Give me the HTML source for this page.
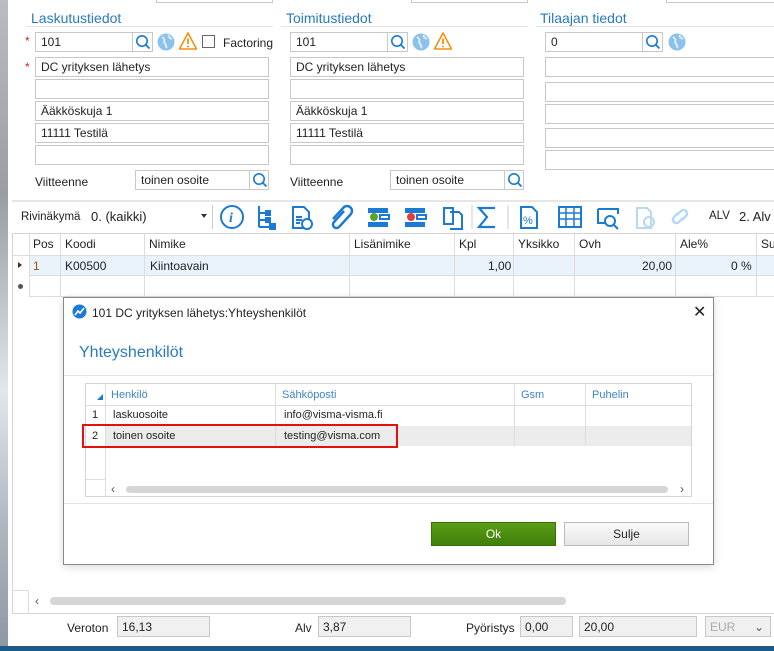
<!DOCTYPE html>
<html><head><meta charset="utf-8"><style>
*{margin:0;padding:0;box-sizing:border-box}
body{width:774px;height:651px;overflow:hidden;background:#fff;font-family:"Liberation Sans",sans-serif;font-size:12px;color:#222;position:relative}
.a{position:absolute}
.in{position:absolute;border:1px solid #c8c8c8;background:#fff;height:20px;padding:2px 5px;font-size:12px;white-space:nowrap}
.sb{position:absolute;border:1px solid #c8c8c8;background:#fff;width:21px;height:20px}
.h{position:absolute;color:#2a7ac0;font-size:14px}
.hl{position:absolute;height:1px;background:#e3e3e3}
.lbl{position:absolute;font-size:12px}
.req{position:absolute;color:#e02020;font-size:12px}
.th{position:absolute;top:234px;height:21px;border-right:1px solid #ddd;padding:3px 4px;font-size:12px}
.vl{position:absolute;width:1px;background:#ddd}
.ro{position:absolute;border:1px solid #c8c8c8;background:#f0f0f0;height:21px;padding:3px 4px;font-size:12px}
</style></head><body>
<div class="a" style="left:0;top:0;width:8px;height:651px;background:linear-gradient(#b9bcc0,#9a9ea4 30%,#c9ced4 50%,#e2e7ed 60%,#b0b8c2 80%,#8d96a2)"></div>
<div class="a" style="left:0;top:646px;width:774px;height:5px;background:#1d5a86"></div>
<div class="a" style="left:156px;top:-2px;width:117px;height:5px;border:1px solid #c8c8c8"></div>
<div class="a" style="left:411px;top:-2px;width:117px;height:5px;border:1px solid #c8c8c8"></div>
<div class="a" style="left:666px;top:-2px;width:110px;height:5px;border:1px solid #c8c8c8"></div>

<svg width="0" height="0" style="position:absolute"><defs>
<g id="mag"><circle cx="9" cy="8" r="5.2" fill="none" stroke="#1a7ad4" stroke-width="1.6"/><line x1="12.8" y1="11.8" x2="16.5" y2="15.5" stroke="#1a7ad4" stroke-width="1.8"/></g>
<g id="glb"><circle cx="9" cy="9" r="8.5" fill="#8cc2ea"/><path d="M5 4c2 1 3 3 2 5 2 1 1 4 3 6M12 2c-1 2 1 3 3 4" stroke="#d8ecfa" stroke-width="2" fill="none"/></g>
<g id="warn"><path d="M9 1L17.5 17H0.5Z" fill="none" stroke="#f29111" stroke-width="1.6" stroke-linejoin="round"/><line x1="9" y1="6.5" x2="9" y2="12" stroke="#f29111" stroke-width="1.8"/><circle cx="9" cy="14.5" r="1" fill="#f29111"/></g>
</defs></svg>

<!-- Laskutustiedot -->
<div class="h" style="left:31px;top:10px">Laskutustiedot</div>
<div class="hl" style="left:26px;top:26px;width:247px"></div>
<div class="req" style="left:25px;top:34px">*</div>
<div class="in" style="left:35px;top:32px;width:98px">101</div>
<div class="sb" style="left:132px;top:32px"><svg width="20" height="19"><use href="#mag"/></svg></div>
<svg class="a" style="left:157px;top:33px" width="18" height="18"><use href="#glb"/></svg>
<svg class="a" style="left:179px;top:32px" width="18" height="18"><use href="#warn"/></svg>
<div class="a" style="left:202px;top:35px;width:13px;height:13px;border:1px solid #666"></div>
<div class="lbl" style="left:223px;top:36px">Factoring</div>
<div class="req" style="left:25px;top:60px">*</div>
<div class="in" style="left:35px;top:57px;width:234px">DC yrityksen lähetys</div>
<div class="in" style="left:35px;top:79px;width:234px"></div>
<div class="in" style="left:35px;top:101px;width:234px">Ääkköskuja 1</div>
<div class="in" style="left:35px;top:123px;width:234px">11111 Testilä</div>
<div class="in" style="left:35px;top:145px;width:234px"></div>
<div class="lbl" style="left:35px;top:175px">Viitteenne</div>
<div class="in" style="left:135px;top:170px;width:115px">toinen osoite</div>
<div class="sb" style="left:249px;top:170px;width:20px"><svg width="20" height="19"><use href="#mag"/></svg></div>

<!-- Toimitustiedot -->
<div class="h" style="left:286px;top:10px">Toimitustiedot</div>
<div class="hl" style="left:281px;top:26px;width:247px"></div>
<div class="in" style="left:290px;top:32px;width:98px">101</div>
<div class="sb" style="left:387px;top:32px"><svg width="20" height="19"><use href="#mag"/></svg></div>
<svg class="a" style="left:412px;top:33px" width="18" height="18"><use href="#glb"/></svg>
<svg class="a" style="left:434px;top:32px" width="18" height="18"><use href="#warn"/></svg>
<div class="in" style="left:290px;top:57px;width:234px">DC yrityksen lähetys</div>
<div class="in" style="left:290px;top:79px;width:234px"></div>
<div class="in" style="left:290px;top:101px;width:234px">Ääkköskuja 1</div>
<div class="in" style="left:290px;top:123px;width:234px">11111 Testilä</div>
<div class="in" style="left:290px;top:145px;width:234px"></div>
<div class="lbl" style="left:290px;top:175px">Viitteenne</div>
<div class="in" style="left:390px;top:170px;width:115px">toinen osoite</div>
<div class="sb" style="left:504px;top:170px;width:20px"><svg width="20" height="19"><use href="#mag"/></svg></div>

<!-- Tilaajan -->
<div class="h" style="left:540px;top:10px">Tilaajan tiedot</div>
<div class="hl" style="left:536px;top:26px;width:240px"></div>
<div class="in" style="left:545px;top:32px;width:98px">0</div>
<div class="sb" style="left:642px;top:32px"><svg width="20" height="19"><use href="#mag"/></svg></div>
<svg class="a" style="left:668px;top:33px" width="18" height="18"><use href="#glb"/></svg>
<div class="in" style="left:545px;top:57px;width:240px"></div>
<div class="in" style="left:545px;top:82px;width:240px"></div>
<div class="in" style="left:545px;top:104px;width:240px"></div>
<div class="in" style="left:545px;top:128px;width:240px"></div>
<div class="in" style="left:545px;top:150px;width:240px"></div>

<!-- toolbar -->
<div class="a" style="left:12px;top:200px;width:762px;height:2px;background:#e6e6e6"></div>
<div class="lbl" style="left:21px;top:211px;font-size:11.5px">Rivinäkymä</div>
<div class="lbl" style="left:91px;top:209px;font-size:13px">0. (kaikki)</div>
<div class="a" style="left:201px;top:214px;border:3.5px solid transparent;border-top:4px solid #333"></div>
<div class="a" style="left:212px;top:205px;width:1px;height:24px;background:#ccc"></div>
<svg class="a" style="left:218px;top:203px" width="520" height="28" fill="none" stroke="#1a7ad4" stroke-width="2">
<circle cx="14" cy="14" r="11"/><text x="11" y="19" font-family="Liberation Serif" font-style="italic" font-weight="bold" font-size="14" fill="#1a7ad4" stroke="none">i</text>
<path d="M41 3v21M41 10h8M41 17h8M41 24h10"/><rect x="48" y="8" width="4" height="4" fill="#1a7ad4"/><rect x="48" y="15" width="4" height="4" fill="#1a7ad4"/><rect x="52" y="21" width="5" height="5" fill="#1a7ad4"/>
<path d="M75 4h11l5 5v16H75z"/><circle cx="89" cy="21" r="5" fill="#fff"/><path d="M78 14h6M78 17h6M78 20h4"/>
<path d="M126 8l-10 11a3.5 3.5 0 0 0 5 5l12-13a5 5 0 0 0-7-7l-11 12" stroke-width="2.5"/>
<rect x="150" y="5" width="20" height="5" fill="#1a7ad4" stroke="none"/><rect x="150" y="19" width="20" height="5" fill="#1a7ad4" stroke="none"/><circle cx="156" cy="14" r="4" fill="#57a82a" stroke="none"/><rect x="162" y="12" width="9" height="4" fill="none"/>
<rect x="187" y="5" width="20" height="5" fill="#1a7ad4" stroke="none"/><rect x="187" y="19" width="20" height="5" fill="#1a7ad4" stroke="none"/><circle cx="193" cy="14" r="4" fill="#e04040" stroke="none"/><rect x="199" y="12" width="9" height="4" fill="none"/>
<path d="M226 5h9v16h-9zM232 9h9l3 3v14h-12"/>
<path d="M277 5h-16l8 9-8 10h16" stroke-width="2.2"/>
<path d="M303 4h11l5 5v16h-16z"/><text x="305" y="21" font-size="11" fill="#1a7ad4" stroke="none">%</text>
<rect x="341" y="4" width="22" height="20"/><path d="M341 10h22M341 16h22M348 4v20M356 4v20" stroke-width="1.5"/>
<path d="M380 6h20v5M380 6v14h8"/><circle cx="392" cy="18" r="5"/><path d="M396 22l4 4"/>
<path d="M419 5h10l4 4v16h-14z" stroke="#b8d8f3"/><circle cx="431" cy="19" r="5" stroke="#b8d8f3"/>
<path d="M460 10l-4 4a3.5 3.5 0 0 0 5 5l4-4M464 17l4-4a3.5 3.5 0 0 0-5-5l-4 4" stroke="#b8d8f3" stroke-width="2.5"/>
<line x1="254" y1="2" x2="254" y2="26" stroke="#ccc" stroke-width="1"/><line x1="290" y1="2" x2="290" y2="26" stroke="#ccc" stroke-width="1"/>
</svg>
<div class="lbl" style="left:709px;top:210px;font-size:11.5px">ALV</div>
<div class="lbl" style="left:739px;top:209px;font-size:13px">2. Alv</div>

<!-- grid -->
<div class="a" style="left:12px;top:233px;width:764px;height:381px;border:1px solid #d4d4d4;border-right:none"></div>
<div class="a" style="left:12px;top:255px;width:762px;height:1px;background:#ddd"></div>
<div class="a" style="left:29px;top:256px;width:745px;height:19px;background:#eaf3fb"></div>
<div class="a" style="left:29px;top:275px;width:745px;height:1px;background:#ddd"></div>
<div class="a" style="left:29px;top:296px;width:745px;height:1px;background:#ddd"></div>
<div class="vl" style="left:29px;top:234px;height:62px"></div>
<div class="th" style="left:29px;width:32px">Pos</div>
<div class="th" style="left:61px;width:84px">Koodi</div>
<div class="th" style="left:145px;width:205px">Nimike</div>
<div class="th" style="left:350px;width:105px">Lisänimike</div>
<div class="th" style="left:455px;width:59px">Kpl</div>
<div class="th" style="left:514px;width:61px">Yksikko</div>
<div class="th" style="left:575px;width:101px">Ovh</div>
<div class="th" style="left:676px;width:81px">Ale%</div>
<div class="th" style="left:757px;width:30px">Su</div>
<div class="vl" style="left:60px;top:255px;height:41px"></div><div class="vl" style="left:144px;top:255px;height:41px"></div><div class="vl" style="left:349px;top:255px;height:41px"></div><div class="vl" style="left:454px;top:255px;height:41px"></div><div class="vl" style="left:513px;top:255px;height:41px"></div><div class="vl" style="left:574px;top:255px;height:41px"></div><div class="vl" style="left:675px;top:255px;height:41px"></div><div class="vl" style="left:756px;top:255px;height:41px"></div>
<div class="a" style="left:18px;top:262px;border:3px solid transparent;border-left:4px solid #333"></div>
<div class="a" style="left:18px;top:284px;width:5px;height:5px;background:#555;border-radius:50%"></div>
<div class="lbl" style="left:33px;top:259px;color:#a05000">1</div>
<div class="lbl" style="left:65px;top:259px">K00500</div>
<div class="lbl" style="left:150px;top:259px">Kiintoavain</div>
<div class="lbl" style="left:488px;top:259px">1,00</div>
<div class="lbl" style="left:642px;top:259px">20,00</div>
<div class="lbl" style="left:731px;top:259px">0 %</div>

<!-- bottom scrollbar -->
<div class="a" style="left:12px;top:590px;width:17px;height:24px;border-right:1px solid #ddd;border-top:1px solid #ddd"></div>
<div class="lbl" style="left:35px;top:594px;color:#555">‹</div>
<div class="a" style="left:50px;top:597px;width:516px;height:8px;background:#d6d6d6;border-radius:4px"></div>
<div class="lbl" style="left:67px;top:621px">Veroton</div>
<div class="ro" style="left:117px;top:616px;width:93px">16,13</div>
<div class="lbl" style="left:295px;top:621px">Alv</div>
<div class="ro" style="left:318px;top:616px;width:93px">3,87</div>
<div class="lbl" style="left:466px;top:621px">Pyöristys</div>
<div class="ro" style="left:520px;top:616px;width:53px">0,00</div>
<div class="ro" style="left:579px;top:616px;width:118px">20,00</div>
<div class="ro" style="left:705px;top:616px;width:66px;color:#aaa">EUR <span style="position:absolute;right:6px;color:#555">⌄</span></div>

<!-- dialog -->
<div class="a" style="left:63px;top:297px;width:651px;height:268px;background:#fff;border:1px solid #8a8a8a;box-shadow:0 2px 8px rgba(0,0,0,.15)"></div>
<svg class="a" style="left:72px;top:304px" width="15" height="15"><circle cx="7.5" cy="7.5" r="7" fill="#1a7ad4"/><path d="M3 11l3-4 2 2 4-5" stroke="#fff" stroke-width="1.6" fill="none"/></svg>
<div class="lbl" style="left:92px;top:306px">101 DC yrityksen lähetys:Yhteyshenkilöt</div>
<div class="lbl" style="left:693px;top:302px;font-size:16px">✕</div>
<div class="a" style="left:79px;top:344px;color:#2a7ac0;font-size:16px">Yhteyshenkilöt</div>
<div class="a" style="left:64px;top:375px;width:649px;height:1px;background:#e3e3e3"></div>
<div class="a" style="left:85px;top:383px;width:607px;height:114px;border:1px solid #d4d4d4"></div>
<div class="a" style="left:86px;top:405px;width:605px;height:1px;background:#ddd"></div>
<div class="a" style="left:105px;top:426px;width:586px;height:20px;background:#ececec"></div>
<div class="vl" style="left:105px;top:384px;height:112px"></div>
<div class="vl" style="left:275px;top:384px;height:62px"></div>
<div class="vl" style="left:514px;top:384px;height:62px"></div>
<div class="vl" style="left:585px;top:384px;height:62px"></div>
<div class="a" style="left:86px;top:479px;width:19px;height:1px;background:#ddd"></div>
<div class="a" style="left:97px;top:394px;border:3px solid transparent;border-right-color:#1a7ad4;border-bottom-color:#1a7ad4"></div>
<div class="lbl" style="left:111px;top:389px;color:#3a86c8;font-size:11px">Henkilö</div>
<div class="lbl" style="left:282px;top:389px;color:#3a86c8;font-size:11px">Sähköposti</div>
<div class="lbl" style="left:521px;top:389px;color:#3a86c8;font-size:11px">Gsm</div>
<div class="lbl" style="left:592px;top:389px;color:#3a86c8;font-size:11px">Puhelin</div>
<div class="lbl" style="left:92px;top:409px;font-size:11px">1</div>
<div class="lbl" style="left:113px;top:409px;font-size:11px">laskuosoite</div>
<div class="lbl" style="left:284px;top:409px;font-size:11px">info@visma-visma.fi</div>
<div class="lbl" style="left:92px;top:430px;font-size:11px">2</div>
<div class="lbl" style="left:113px;top:430px;font-size:11px">toinen osoite</div>
<div class="lbl" style="left:284px;top:430px;font-size:11px">testing@visma.com</div>
<div class="a" style="left:82px;top:424px;width:316px;height:24px;border:2px solid #e41010"></div>
<div class="lbl" style="left:111px;top:482px;color:#555">‹</div>
<div class="a" style="left:126px;top:486px;width:542px;height:7px;background:#d6d6d6;border-radius:4px"></div>
<div class="lbl" style="left:680px;top:482px;color:#555">›</div>
<div class="a" style="left:64px;top:503px;width:649px;height:1px;background:#e3e3e3"></div>
<div class="a" style="left:431px;top:522px;width:125px;height:24px;background:linear-gradient(#5a9e14,#3e7f0a);border:1px solid #3a700a;color:#fff;text-align:center;line-height:22px;font-size:12px">Ok</div>
<div class="a" style="left:564px;top:522px;width:125px;height:24px;background:linear-gradient(#fafafa,#e6e6e6);border:1px solid #bbb;text-align:center;line-height:22px;font-size:12px">Sulje</div>
</body></html>
